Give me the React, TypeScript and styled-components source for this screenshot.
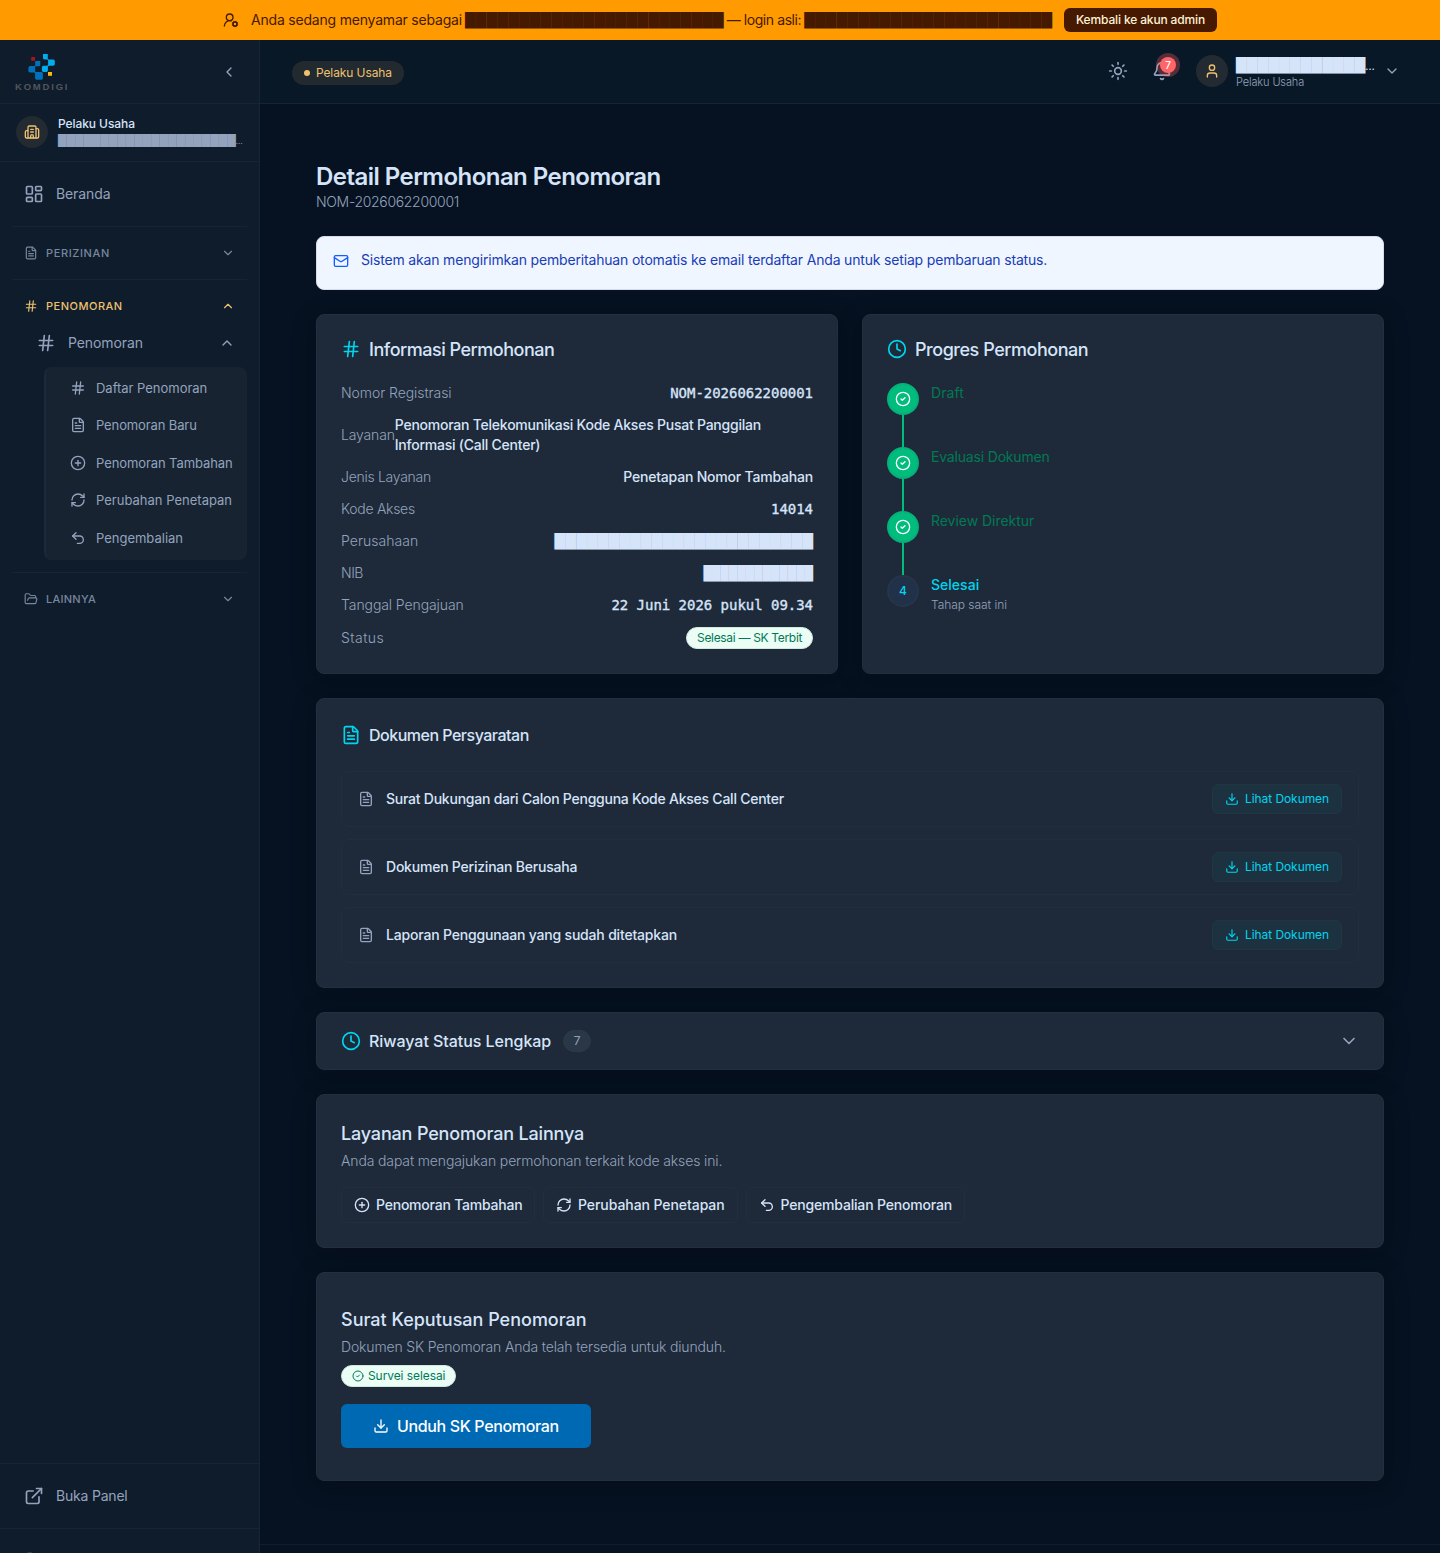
import React from 'react';
import styled, { createGlobalStyle, css } from 'styled-components';
import {
  Bell, Building2, ChevronDown, ChevronLeft, ChevronUp, CircleCheck, CirclePlus, Clock, Download,
  ExternalLink, FileText, FolderOpen, Hash, LayoutDashboard, LogOut, Mail, RefreshCw, Sun, Undo2,
  User, UserRoundCog,
} from 'lucide-react';
import type { LucideIcon } from 'lucide-react';

const color = {
  page: '#061221',
  sidebar: '#0f1c2b',
  header: '#091827',
  card: '#1e2a39',
  line: '#162433',
  cardLine: '#222f3f',
  faintLine: '#222e3d',
  text: '#d6e4fa',
  muted: '#94a3bd',
  dim: '#77869e',
  cyan: '#00d5ee',
  gold: '#edc170',
  amber: '#ff9b00',
  brown: '#461901',
  green: '#00bc7d',
  greenText: '#007a55',
  mint: '#ecfdf5',
};

const GlobalStyle = createGlobalStyle`
  *, *::before, *::after { box-sizing: border-box; }
  html, body { margin: 0; background: ${color.page}; }
  body { font-family: Inter, "Noto Sans", sans-serif; font-size: 14px; line-height: 20px; color: ${color.text}; overflow: hidden; }
  h1, h2, p { margin: 0; }
  button { font: inherit; margin: 0; cursor: pointer; }
  svg { flex: none; display: block; }
`;

type Tracked = { $ls?: number };
const track = css<Tracked>`
  letter-spacing: ${({ $ls = 0 }) => $ls}px;
  white-space: nowrap;
`;

const Screen = styled.div`
  height: 1553px;
  display: flex;
  flex-direction: column;
  overflow: hidden;
`;

/* Impersonation banner */
const Banner = styled.div`
  flex: none;
  height: 40px;
  display: flex;
  align-items: center;
  justify-content: center;
  gap: 12px;
  background: ${color.amber};
  color: ${color.brown};
`;
const BannerText = styled.div`
  display: flex;
  width: 801px;
  justify-content: space-between;
  font-weight: 400;
`;
const BannerPhrase = styled.span<Tracked>`${track}`;
const Redacted = styled.span<{ $size?: number; $mono?: boolean }>`
  font-family: ${({ $mono }) => ($mono ? '"DejaVu Sans Mono"' : '"DejaVu Sans"')}, sans-serif;
  font-size: ${({ $size = 14 }) => $size}px;
  white-space: nowrap;
`;
const BannerButton = styled.button<Tracked>`
  height: 24px;
  width: 153px;
  padding: 0;
  border: 0;
  border-radius: 6px;
  background: ${color.brown};
  color: #fef3d6;
  font-size: 12px;
  font-weight: 500;
  ${track}
`;

const Body = styled.div`
  flex: 1;
  min-height: 0;
  display: flex;
`;

/* Sidebar */
const Sidebar = styled.aside`
  flex: none;
  width: 260px;
  display: flex;
  flex-direction: column;
  background: ${color.sidebar};
  border-right: 1px solid #172636;
  overflow: hidden;
`;
const Brand = styled.div`
  flex: none;
  height: 64px;
  display: flex;
  align-items: center;
  justify-content: space-between;
  padding: 0 22px 0 15px;
  border-bottom: 1px solid ${color.line};
  color: ${color.muted};
`;
const BrandMark = styled.div`
  display: flex;
  flex-direction: column;
  gap: 2px;
  padding-top: 1px;
`;
const BrandName = styled.span`
  font-family: "Liberation Sans", Arial, sans-serif;
  font-size: 9.5px;
  font-weight: 700;
  line-height: 10px;
  letter-spacing: 1.8px;
  color: #50555e;
`;
const Profile = styled.div`
  flex: none;
  height: 58px;
  display: flex;
  align-items: center;
  gap: 10px;
  padding: 0 16px 2px;
  border-bottom: 1px solid ${color.line};
`;
const Avatar = styled.span`
  flex: none;
  width: 32px;
  height: 32px;
  border-radius: 50%;
  display: grid;
  place-items: center;
  background: #232a31;
  color: ${color.gold};
`;
const ProfileText = styled.div`
  display: flex;
  flex-direction: column;
`;
const ProfileName = styled.span<Tracked>`
  font-size: 12px;
  font-weight: 500;
  line-height: 16px;
  ${track}
`;
const ProfileCompany = styled.span`
  line-height: 18px;
  height: 16px;
  color: ${color.muted};
  font-size: 8px;
  white-space: nowrap;
`;
const Nav = styled.nav`
  flex: 1;
  padding: 12px 12px 0;
`;
const NavLink = styled.a<Tracked>`
  height: 40px;
  display: flex;
  align-items: center;
  gap: 12px;
  padding: 0 12px;
  color: ${color.muted};
  font-weight: 400;
  ${track}
`;
const NavRule = styled.hr`
  margin: 12px 0;
  border: 0;
  height: 1px;
  background: ${color.line};
`;
const GroupHeader = styled.div<{ $active?: boolean }>`
  height: 28px;
  display: flex;
  align-items: center;
  gap: 8px;
  padding: 0 12px;
  color: ${({ $active }) => ($active ? color.gold : color.dim)};
`;
const GroupName = styled.span<Tracked>`
  flex: 1;
  font-size: 11px;
  font-weight: 500;
  ${track}
`;
const SubHeader = styled.div`
  height: 40px;
  margin-top: 3px;
  display: flex;
  align-items: center;
  gap: 12px;
  padding: 0 12px 0 24px;
  color: ${color.muted};
`;
const SubHeaderName = styled.span<Tracked>`
  flex: 1;
  font-weight: 400;
  ${track}
`;
const SubMenu = styled.div`
  margin: 4px 0 0 32px;
  height: 193px;
  display: flex;
  flex-direction: column;
  gap: 2px;
  padding: 3px 0;
  border-left: 2px solid #1b2938;
  border-radius: 8px;
  background: #172331;
`;
const SubLink = styled.a<Tracked>`
  height: 35.5px;
  display: flex;
  align-items: center;
  gap: 10px;
  padding-left: 24px;
  font-size: 13px;
  font-weight: 400;
  color: ${color.muted};
  ${track}
`;
const SidebarFoot = styled.div`
  flex: none;
  height: 65px;
  padding: 12px;
  border-top: 1px solid ${color.line};
`;
const SidebarTail = styled(SidebarFoot)`
  height: 25px;
`;

/* Top bar */
const Content = styled.div`
  flex: 1;
  min-width: 0;
  display: flex;
  flex-direction: column;
`;
const TopBar = styled.header`
  flex: none;
  height: 64px;
  display: flex;
  align-items: center;
  justify-content: space-between;
  padding: 0 40px 0 32px;
  background: ${color.header};
  border-bottom: 1px solid ${color.line};
`;
const RoleChip = styled.span<Tracked>`
  width: 112px;
  height: 24px;
  margin-top: 2px;
  display: flex;
  align-items: center;
  gap: 6px;
  padding: 0 12px;
  border-radius: 12px;
  background: #22292f;
  color: ${color.gold};
  font-size: 12px;
  font-weight: 400;
  ${track}
`;
const RoleDot = styled.i`
  width: 6px;
  height: 6px;
  border-radius: 50%;
  background: currentColor;
`;
const Actions = styled.div`
  display: flex;
  align-items: center;
  margin-bottom: 2px;
  color: ${color.muted};
`;
const BellButton = styled.div`
  position: relative;
  margin: 0 24px;
`;
const BellCount = styled.span`
  position: absolute;
  left: 8px;
  top: -4px;
  width: 16px;
  height: 16px;
  border-radius: 50%;
  background: #ff6467;
  box-shadow: 0 0 0 4px rgba(255, 100, 103, 0.3);
  color: #fff;
  font-size: 10px;
  font-weight: 500;
  line-height: 16px;
  text-align: center;
`;
const Account = styled.div`
  width: 140px;
  margin: 3px 8px 0;
  display: flex;
  flex-direction: column;
`;
const AccountName = styled.span`
  height: 17px;
  line-height: 18px;
  color: ${color.text};
  font-size: 11px;
  white-space: nowrap;
`;
const AccountRole = styled.span<Tracked>`
  margin-top: 2px;
  font-size: 11px;
  font-weight: 300;
  line-height: 14px;
  ${track}
`;

/* Page */
const Main = styled.main`
  padding: 57px 56px 0;
  display: flex;
  flex-direction: column;
  gap: 24px;
`;
const Title = styled.h1`
  font-size: 24px;
  line-height: 31px;
  font-weight: 600;
  letter-spacing: -0.54px;
`;
const TitleSub = styled.p<Tracked>`
  color: ${color.muted};
  font-weight: 300;
  ${track}
`;
const Alert = styled.div<Tracked>`
  height: 54px;
  display: flex;
  align-items: flex-start;
  gap: 12px;
  padding: 13px 16px;
  border: 1px solid #d3dcec;
  border-radius: 8px;
  background: #eff6ff;
  color: #193cb8;
  ${track}
  svg { color: #155dfc; margin-top: 3px; }
`;
const Card = styled.section<{ $h: number }>`
  height: ${({ $h }) => $h}px;
  padding: 24px;
  border: 1px solid ${color.cardLine};
  border-radius: 8px;
  background: ${color.card};
  box-shadow: 0 4px 24px rgba(0, 4, 16, 0.3);
`;
const CollapsedCard = styled(Card)`
  display: flex;
  align-items: center;
  padding: 0 24px;
  color: ${color.muted};
`;
const DecreeCard = styled(Card)`
  padding: 32px 24px;
`;
const Columns = styled.div`
  display: grid;
  grid-template-columns: 1fr 1fr;
  gap: 24px;
`;
const CardHeading = styled.h2<Tracked & { $size?: number; $h?: number }>`
  height: ${({ $h = 20 }) => $h}px;
  display: flex;
  align-items: center;
  gap: 8px;
  font-size: ${({ $size = 18 }) => $size}px;
  font-weight: 500;
  color: ${color.text};
  ${track}
  svg { color: ${color.cyan}; }
`;
const HeadingText = styled.span`
  padding-top: 2px;
`;
const InfoList = styled.div`
  margin-top: 24px;
  display: flex;
  flex-direction: column;
  gap: 12px;
`;
const InfoRow = styled.div`
  display: flex;
  align-items: center;
  justify-content: space-between;
`;
const InfoLabel = styled.span<Tracked>`
  color: ${color.muted};
  font-weight: 300;
  ${track}
`;
const InfoValue = styled.span<Tracked>`
  font-weight: 500;
  letter-spacing: ${({ $ls = 0 }) => $ls}px;
`;
const MonoValue = styled.span`
  font-family: "DejaVu Sans Mono", monospace;
  letter-spacing: -0.03px;
  -webkit-text-stroke: 0.35px currentColor;
`;
const StatusBadge = styled.span<Tracked & { $w: number }>`
  width: ${({ $w }) => $w}px;
  height: 22px;
  display: flex;
  align-items: center;
  gap: 4px;
  padding: 0 10px;
  border: 1px solid #cfe9dc;
  border-radius: 11px;
  background: ${color.mint};
  color: ${color.greenText};
  font-size: 12px;
  font-weight: 400;
  ${track}
`;
const Steps = styled.div`
  margin-top: 24px;
  display: flex;
  flex-direction: column;
`;
const Step = styled.div`
  display: flex;
  gap: 12px;
`;
const StepRail = styled.div`
  display: flex;
  flex-direction: column;
  align-items: center;
`;
const StepDot = styled.span<{ $done: boolean }>`
  width: 32px;
  height: 32px;
  border-radius: 50%;
  display: grid;
  place-items: center;
  font-size: 12px;
  font-weight: 500;
  border: 2px solid ${({ $done }) => ($done ? '#06b078' : '#26354a')};
  background: ${({ $done }) => ($done ? color.green : '#21314a')};
  color: ${({ $done }) => ($done ? '#fff' : color.cyan)};
`;
const StepLine = styled.i`
  width: 2px;
  height: 32px;
  background: ${color.green};
`;
const StepName = styled.p<Tracked & { $done: boolean }>`
  font-weight: ${({ $done }) => ($done ? 400 : 500)};
  color: ${({ $done }) => ($done ? color.greenText : color.cyan)};
  ${track}
`;
const StepNote = styled.p<Tracked>`
  margin-top: 2px;
  font-size: 12px;
  font-weight: 300;
  line-height: 16px;
  color: ${color.muted};
  ${track}
`;
const DocList = styled.div`
  margin-top: 24px;
  display: flex;
  flex-direction: column;
  gap: 12px;
`;
const DocRow = styled.div`
  height: 56px;
  display: flex;
  align-items: center;
  gap: 12px;
  padding: 0 16px;
  border: 1px solid ${color.faintLine};
  border-radius: 8px;
  color: ${color.muted};
`;
const DocName = styled.span<Tracked>`
  flex: 1;
  font-weight: 500;
  color: ${color.text};
  ${track}
`;
const ViewButton = styled.button<Tracked>`
  width: 130px;
  height: 30px;
  display: flex;
  align-items: center;
  gap: 6px;
  padding: 0 12px;
  border: 1px solid #20373f;
  border-radius: 6px;
  background: #1d3241;
  color: ${color.cyan};
  font-size: 12px;
  font-weight: 400;
  ${track}
`;
const CountPill = styled.span`
  width: 28px;
  height: 22px;
  margin: 0 auto 0 12px;
  border: 1px solid #2c3949;
  border-radius: 11px;
  background: #2a3747;
  font-size: 12px;
  line-height: 20px;
  text-align: center;
`;
const CardNote = styled.p<Tracked>`
  margin-top: 3px;
  color: ${color.muted};
  font-weight: 300;
  ${track}
`;
const ServiceList = styled.div`
  margin-top: 16px;
  display: flex;
  gap: 8px;
`;
const ServiceButton = styled.button<Tracked & { $w: number }>`
  width: ${({ $w }) => $w}px;
  height: 36px;
  display: flex;
  align-items: center;
  gap: 6px;
  padding: 0 12px;
  border: 1px solid ${color.faintLine};
  border-radius: 6px;
  background: transparent;
  color: ${color.text};
  font-weight: 500;
  ${track}
`;
const BadgeRow = styled.div`
  margin: 8px 0 17px;
`;
const DownloadButton = styled.button<Tracked>`
  width: 250px;
  height: 44px;
  display: flex;
  align-items: center;
  gap: 8px;
  padding: 0 32px;
  border: 0;
  border-radius: 6px;
  background: #0069b4;
  color: #fff;
  font-size: 16px;
  font-weight: 500;
  ${track}
`;
const Footer = styled.footer`
  margin-top: 63px;
  flex: 1;
  border-top: 1px solid #0f1d2c;
`;

const blocks = (n: number) => '█'.repeat(n);

const KomdigiLogo = () => (
  <svg width="54" height="27" viewBox="15 53 54 27" shapeRendering="geometricPrecision">
    <path fill="#a3161c" d="M31.2 57h3.800v3.800h-3.800z" />
    <path fill="#0072bc" d="M35.200 61h5.100v4.300l-1 .9h-3.800l-.4.500v4.500l.5.700h6l1.300 1.200v5.500l-1 1.100h-5.800l-1-1.100v-5.400l-.8-.6h-4.500l-1.400-1.200v-4.200l1.400-1.200h4.900l.5-.6z" />
    <path fill="#00aeef" d="M43 54h4.800v4.800l.8.600h4.900l1.300 1.200v4l-1.300 1.200h-4.500l-1.100.8v4.200l-1 1.200h-3.900l-1.100-1.200v-4l1.100-1h4.300l.8-1v-4.600l-.8-.8h-3.300l-1-1z" />
    <path fill="#fdb913" d="M48 72h4v3.800h-4z" />
  </svg>
);

const subLinks: { icon: LucideIcon; name: string; ls: number }[] = [
  { icon: Hash, name: 'Daftar Penomoran', ls: -0.02 },
  { icon: FileText, name: 'Penomoran Baru', ls: -0.12 },
  { icon: CirclePlus, name: 'Penomoran Tambahan', ls: -0.09 },
  { icon: RefreshCw, name: 'Perubahan Penetapan', ls: 0.01 },
  { icon: Undo2, name: 'Pengembalian', ls: -0.01 },
];

const steps = [
  { name: 'Draft', ls: 0.1, done: true },
  { name: 'Evaluasi Dokumen', ls: -0.18, done: true },
  { name: 'Review Direktur', ls: -0.04, done: true },
  { name: 'Selesai', ls: 0.02, done: false },
];

const docs = [
  { name: 'Surat Dukungan dari Calon Pengguna Kode Akses Call Center', ls: -0.24 },
  { name: 'Dokumen Perizinan Berusaha', ls: -0.22 },
  { name: 'Laporan Penggunaan yang sudah ditetapkan', ls: -0.185 },
];

const services: { icon: LucideIcon; name: string; ls: number; w: number }[] = [
  { icon: CirclePlus, name: 'Penomoran Tambahan', ls: -0.22, w: 194 },
  { icon: RefreshCw, name: 'Perubahan Penetapan', ls: -0.07, w: 194.5 },
  { icon: Undo2, name: 'Pengembalian Penomoran', ls: -0.18, w: 219 },
];

export default function App() {
  return (
    <Screen>
      <GlobalStyle />
      <Banner>
        <UserRoundCog size={16} />
        <BannerText>
          <BannerPhrase $ls={-0.2}>Anda sedang menyamar sebagai</BannerPhrase>
          <Redacted>{blocks(24)}</Redacted>
          <BannerPhrase $ls={-0.42}>— login asli:</BannerPhrase>
          <Redacted>{blocks(23)}</Redacted>
        </BannerText>
        <BannerButton $ls={-0.14}>Kembali ke akun admin</BannerButton>
      </Banner>
      <Body>
        <Sidebar>
          <Brand>
            <BrandMark>
              <KomdigiLogo />
              <BrandName>KOMDIGI</BrandName>
            </BrandMark>
            <ChevronLeft size={16} />
          </Brand>
          <Profile>
            <Avatar><Building2 size={16} /></Avatar>
            <ProfileText>
              <ProfileName $ls={-0.08}>Pelaku Usaha</ProfileName>
              <ProfileCompany><Redacted $size={11}>{blocks(21)}</Redacted>…</ProfileCompany>
            </ProfileText>
          </Profile>
          <Nav>
            <NavLink $ls={-0.1}><LayoutDashboard size={20} />Beranda</NavLink>
            <NavRule />
            <GroupHeader><FileText size={14} /><GroupName $ls={0.62}>PERIZINAN</GroupName><ChevronDown size={14} /></GroupHeader>
            <NavRule />
            <GroupHeader $active><Hash size={14} /><GroupName $ls={0.5}>PENOMORAN</GroupName><ChevronUp size={14} /></GroupHeader>
            <SubHeader><Hash size={20} /><SubHeaderName $ls={-0.08}>Penomoran</SubHeaderName><ChevronUp size={16} /></SubHeader>
            <SubMenu>
              {subLinks.map(({ icon: Icon, name, ls }) => (
                <SubLink key={name} $ls={ls}><Icon size={16} />{name}</SubLink>
              ))}
            </SubMenu>
            <NavRule />
            <GroupHeader><FolderOpen size={14} /><GroupName $ls={0.25}>LAINNYA</GroupName><ChevronDown size={14} /></GroupHeader>
          </Nav>
          <SidebarFoot><NavLink $ls={-0.2}><ExternalLink size={20} />Buka Panel</NavLink></SidebarFoot>
          <SidebarTail><NavLink><LogOut size={20} /></NavLink></SidebarTail>
        </Sidebar>
        <Content>
          <TopBar>
            <RoleChip $ls={-0.09}><RoleDot />Pelaku Usaha</RoleChip>
            <Actions>
              <Sun size={20} />
              <BellButton><Bell size={20} /><BellCount>7</BellCount></BellButton>
              <Avatar><User size={16} /></Avatar>
              <Account>
                <AccountName><Redacted>{blocks(12)}</Redacted>…</AccountName>
                <AccountRole $ls={-0.12}>Pelaku Usaha</AccountRole>
              </Account>
              <ChevronDown size={16} />
            </Actions>
          </TopBar>
          <Main>
            <div>
              <Title>Detail Permohonan Penomoran</Title>
              <TitleSub $ls={-0.32}>NOM-2026062200001</TitleSub>
            </div>
            <Alert $ls={-0.174}>
              <Mail size={16} />
              Sistem akan mengirimkan pemberitahuan otomatis ke email terdaftar Anda untuk setiap pembaruan status.
            </Alert>
            <Columns>
              <Card $h={360}>
                <CardHeading $ls={-0.48}><Hash size={20} /><HeadingText>Informasi Permohonan</HeadingText></CardHeading>
                <InfoList>
                  <InfoRow><InfoLabel $ls={-0.06}>Nomor Registrasi</InfoLabel><MonoValue>NOM-2026062200001</MonoValue></InfoRow>
                  <InfoRow>
                    <InfoLabel $ls={-0.16}>Layanan</InfoLabel>
                    <InfoValue $ls={-0.235}>Penomoran Telekomunikasi Kode Akses Pusat Panggilan Informasi (Call Center)</InfoValue>
                  </InfoRow>
                  <InfoRow><InfoLabel $ls={-0.29}>Jenis Layanan</InfoLabel><InfoValue $ls={-0.2}>Penetapan Nomor Tambahan</InfoValue></InfoRow>
                  <InfoRow><InfoLabel $ls={-0.28}>Kode Akses</InfoLabel><MonoValue>14014</MonoValue></InfoRow>
                  <InfoRow><InfoLabel $ls={0.05}>Perusahaan</InfoLabel><Redacted>{blocks(24)}</Redacted></InfoRow>
                  <InfoRow><InfoLabel $ls={-0.5}>NIB</InfoLabel><Redacted $mono>{blocks(13)}</Redacted></InfoRow>
                  <InfoRow><InfoLabel $ls={-0.09}>Tanggal Pengajuan</InfoLabel><MonoValue>22 Juni 2026 pukul 09.34</MonoValue></InfoRow>
                  <InfoRow><InfoLabel $ls={0.45}>Status</InfoLabel><StatusBadge $w={127} $ls={-0.32}>Selesai — SK Terbit</StatusBadge></InfoRow>
                </InfoList>
              </Card>
              <Card $h={360}>
                <CardHeading $ls={-0.46}><Clock size={20} /><HeadingText>Progres Permohonan</HeadingText></CardHeading>
                <Steps>
                  {steps.map(({ name, ls, done }, i) => (
                    <Step key={name}>
                      <StepRail>
                        <StepDot $done={done}>{done ? <CircleCheck size={16} /> : i + 1}</StepDot>
                        {done && <StepLine />}
                      </StepRail>
                      <div>
                        <StepName $done={done} $ls={ls}>{name}</StepName>
                        {!done && <StepNote $ls={-0.04}>Tahap saat ini</StepNote>}
                      </div>
                    </Step>
                  ))}
                </Steps>
              </Card>
            </Columns>
            <Card $h={290}>
              <CardHeading $size={16} $h={24} $ls={-0.5}><FileText size={20} />Dokumen Persyaratan</CardHeading>
              <DocList>
                {docs.map(({ name, ls }) => (
                  <DocRow key={name}>
                    <FileText size={16} />
                    <DocName $ls={ls}>{name}</DocName>
                    <ViewButton $ls={-0.07}><Download size={14} />Lihat Dokumen</ViewButton>
                  </DocRow>
                ))}
              </DocList>
            </Card>
            <CollapsedCard $h={58}>
              <CardHeading $size={16} $ls={-0.045}><Clock size={20} />Riwayat Status Lengkap</CardHeading>
              <CountPill>7</CountPill>
              <ChevronDown size={20} />
            </CollapsedCard>
            <Card $h={154}>
              <CardHeading $h={29} $ls={-0.17}>Layanan Penomoran Lainnya</CardHeading>
              <CardNote $ls={-0.13}>Anda dapat mengajukan permohonan terkait kode akses ini.</CardNote>
              <ServiceList>
                {services.map(({ icon: Icon, name, ls, w }) => (
                  <ServiceButton key={name} $w={w} $ls={ls}><Icon size={16} />{name}</ServiceButton>
                ))}
              </ServiceList>
            </Card>
            <DecreeCard $h={209}>
              <CardHeading $h={29} $ls={0}>Surat Keputusan Penomoran</CardHeading>
              <CardNote $ls={-0.155}>Dokumen SK Penomoran Anda telah tersedia untuk diunduh.</CardNote>
              <BadgeRow><StatusBadge $w={115} $ls={-0.08}><CircleCheck size={12} />Survei selesai</StatusBadge></BadgeRow>
              <DownloadButton $ls={-0.35}><Download size={16} />Unduh SK Penomoran</DownloadButton>
            </DecreeCard>
          </Main>
          <Footer />
        </Content>
      </Body>
    </Screen>
  );
}
